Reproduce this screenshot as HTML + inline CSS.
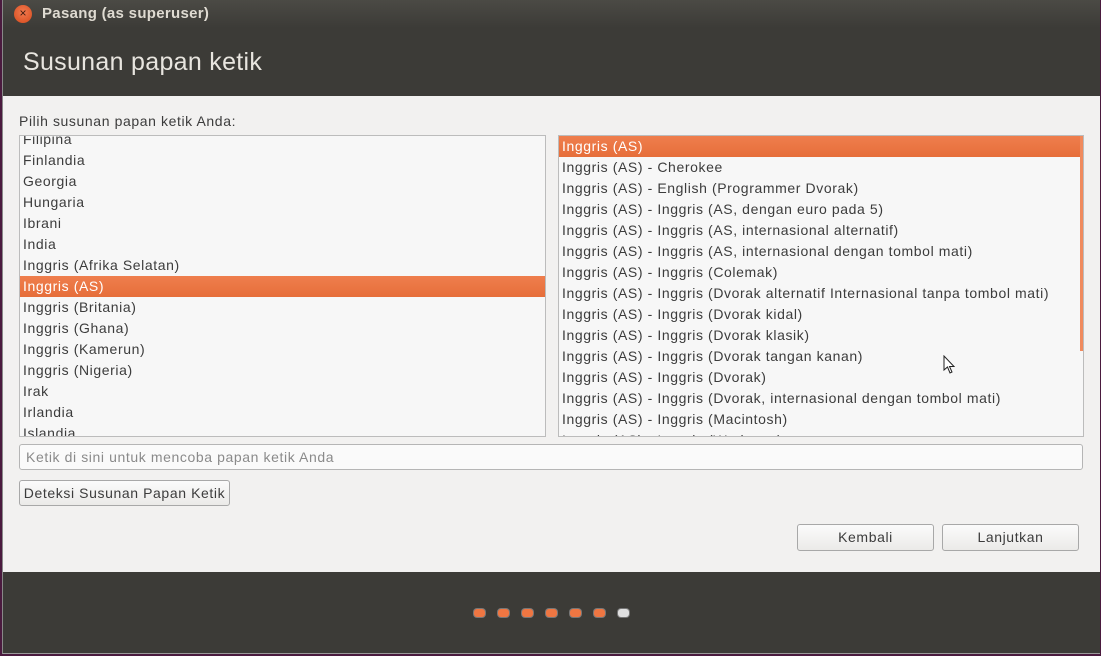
<!DOCTYPE html>
<html><head><meta charset="utf-8"><style>
*{margin:0;padding:0;box-sizing:border-box}
body{width:1101px;height:656px;overflow:hidden;background:#4a1a3e;font-family:"Liberation Sans",sans-serif;color:#3c3c3c;position:relative}
.win{position:absolute;left:2px;top:0;width:1098px;height:654px;background:#3c3b37;border-left:1px solid #888;border-bottom:1px solid #999}
.title{position:absolute;left:0;top:0;width:100%;height:28px;background:linear-gradient(#4b4a45,#3c3b37)}
.close{position:absolute;left:11px;top:5px;width:18px;height:18px;border-radius:50%;background:radial-gradient(circle at 50% 40%,#f27a4f,#d64a1c);color:#3a1a10;font-size:12px;line-height:17px;text-align:center}
.ttext{position:absolute;left:39px;top:5px;color:#dfdbd2;font-weight:bold;font-size:15px;letter-spacing:0.3px}
.h1{position:absolute;left:20px;top:48px;color:#e8e5df;font-size:25px;letter-spacing:0.3px}
.content{position:absolute;left:0;top:96px;width:1097px;height:476px;background:#f2f1f0;letter-spacing:0.6px}
.lbl{position:absolute;left:16px;top:17px;font-size:14px}
.list{position:absolute;background:#f7f7f7;border:1px solid #bcbcbc;overflow:hidden;font-size:14px}
.list div{height:21px;line-height:21px;padding-left:3px;white-space:nowrap}
.list .sel{background:linear-gradient(#ef7e4d,#e66e3a);color:#fff}
.entry{position:absolute;left:16px;top:348px;width:1064px;height:26px;border:1px solid #b5b5b5;border-radius:3px;background:#fafafa;color:#8a8a8a;font-size:14px;line-height:24px;padding-left:6px}
.btn{position:absolute;border:1px solid #a8a8a8;border-radius:3px;background:linear-gradient(#fbfbfb,#ebeae8);font-size:14px;text-align:center;line-height:25px}
.dot{position:absolute;width:11px;height:8px;border-radius:3px;background:#ef7642;box-shadow:0 0 0 1px #777}
</style></head><body>
<div class="win">
<div class="title"><div class="close">×</div><div class="ttext">Pasang (as superuser)</div></div>
<div class="h1">Susunan papan ketik</div>
<div class="content">
<div class="lbl">Pilih susunan papan ketik Anda:</div>
<div class="list" style="left:16px;top:39px;width:527px;height:302px">
<div style="margin-top:-7px">Filipina</div><div>Finlandia</div><div>Georgia</div><div>Hungaria</div><div>Ibrani</div><div>India</div><div>Inggris (Afrika Selatan)</div><div class="sel">Inggris (AS)</div><div>Inggris (Britania)</div><div>Inggris (Ghana)</div><div>Inggris (Kamerun)</div><div>Inggris (Nigeria)</div><div>Irak</div><div>Irlandia</div><div>Islandia</div>
</div>
<div class="list" style="left:555px;top:39px;width:526px;height:302px">
<div style="position:absolute;right:0;top:0;width:3px;height:215px;background:#f08a5d;padding:0"></div>
<div class="sel" style="margin-right:3px">Inggris (AS)</div><div>Inggris (AS) - Cherokee</div><div>Inggris (AS) - English (Programmer Dvorak)</div><div>Inggris (AS) - Inggris (AS, dengan euro pada 5)</div><div>Inggris (AS) - Inggris (AS, internasional alternatif)</div><div>Inggris (AS) - Inggris (AS, internasional dengan tombol mati)</div><div>Inggris (AS) - Inggris (Colemak)</div><div>Inggris (AS) - Inggris (Dvorak alternatif Internasional tanpa tombol mati)</div><div>Inggris (AS) - Inggris (Dvorak kidal)</div><div>Inggris (AS) - Inggris (Dvorak klasik)</div><div>Inggris (AS) - Inggris (Dvorak tangan kanan)</div><div>Inggris (AS) - Inggris (Dvorak)</div><div>Inggris (AS) - Inggris (Dvorak, internasional dengan tombol mati)</div><div>Inggris (AS) - Inggris (Macintosh)</div><div>Inggris (AS) - Inggris (Workman)</div>
</div>
<div class="entry">Ketik di sini untuk mencoba papan ketik Anda</div>
<div class="btn" style="left:16px;top:384px;width:211px;height:26px">Deteksi Susunan Papan Ketik</div>
<div class="btn" style="left:794px;top:428px;width:137px;height:27px">Kembali</div>
<div class="btn" style="left:939px;top:428px;width:137px;height:27px">Lanjutkan</div>
<svg style="position:absolute;left:940px;top:259px" width="14" height="20" viewBox="0 0 14 20"><path d="M1 1 L1 15 L4.5 12 L7 18 L9 17 L6.5 11.5 L11 11.5 Z" fill="#fff" stroke="#222" stroke-width="1"/></svg>
</div>
</div>
<div class="dot" style="left:474px;top:609px"></div>
<div class="dot" style="left:498px;top:609px"></div>
<div class="dot" style="left:522px;top:609px"></div>
<div class="dot" style="left:546px;top:609px"></div>
<div class="dot" style="left:570px;top:609px"></div>
<div class="dot" style="left:594px;top:609px"></div>
<div class="dot" style="left:618px;top:609px;background:#e0e0e0"></div>
</body></html>
